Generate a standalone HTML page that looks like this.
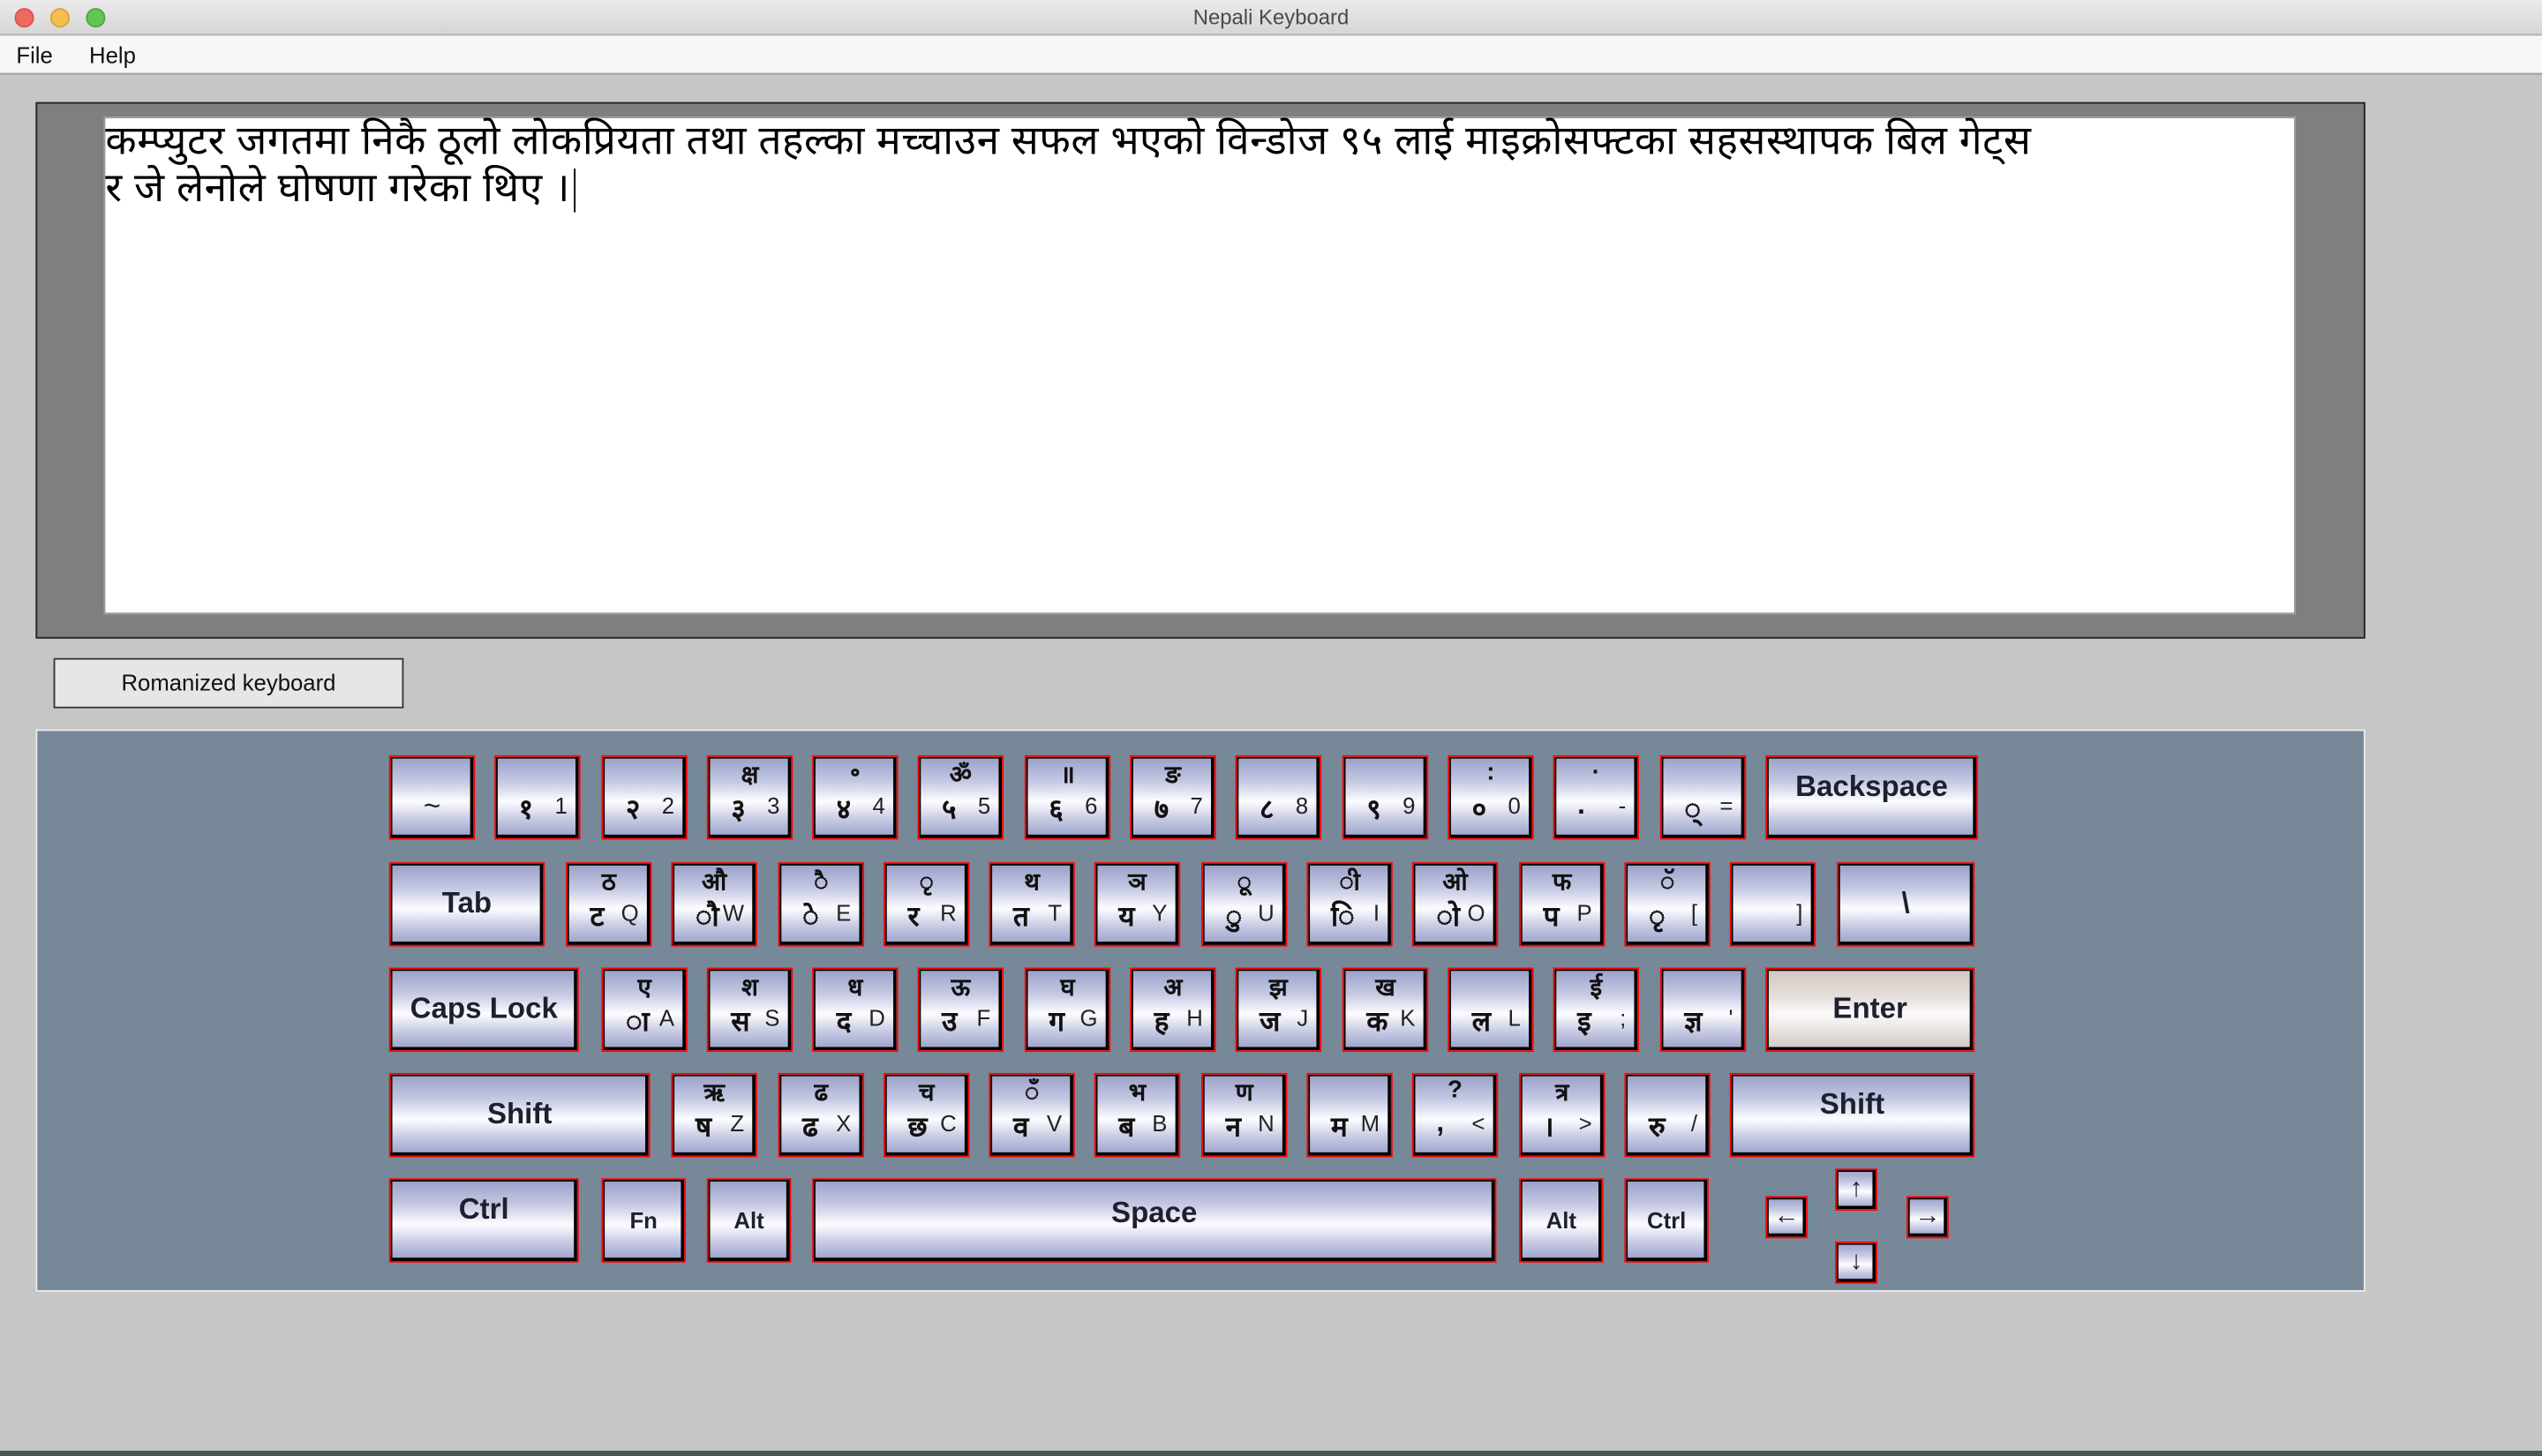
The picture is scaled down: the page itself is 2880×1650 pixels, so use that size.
<!DOCTYPE html>
<html><head><meta charset="utf-8">
<style>
*{margin:0;padding:0;box-sizing:border-box}
html,body{width:2880px;height:1650px;overflow:hidden;background:#c6c6c6}
#w{position:absolute;left:0;top:0;width:1568px;height:898px;transform:scale(1.83674);transform-origin:0 0;background:#c6c6c6;font-family:"Liberation Sans",sans-serif}
.title{position:absolute;left:0;top:0;width:1568px;height:22px;background:linear-gradient(#ebebeb,#d5d5d5);border-bottom:1px solid #b0b0b0;text-align:center;font-size:13px;line-height:22px;color:#4a4a4a}
.dot{position:absolute;top:5px;width:12px;height:12px;border-radius:50%}
.menu{position:absolute;left:0;top:22px;width:1568px;height:24px;background:#f7f7f7;border-bottom:1px solid #9a9a9a;font-size:14px;line-height:24px;color:#111}
.panel{position:absolute;left:22px;top:63px;width:1437px;height:331px;background:#7f7f7f;border:1px solid #222}
.text{position:absolute;left:41px;top:8px;width:1352px;height:307px;background:#fff;border:1px solid #999;font-size:25px;letter-spacing:0.3px;line-height:29px;padding-left:0px;color:#000;white-space:nowrap}
.btn{position:absolute;left:33px;top:406px;width:216px;height:31px;background:#e6e6e6;border:1px solid #333;font-size:14px;line-height:29px;text-align:center;color:#111}
.kb{position:absolute;left:22px;top:450px;width:1437px;height:347px;background:#778899;border:1px solid #eee;}
.k{position:absolute;height:52px;border:1px solid #f00;box-shadow:inset 1px 1px 0 #000,inset -2px -2px 0 #000;background:linear-gradient(#98a0c8 0%,#c4c8e2 30%,#fdfdff 55%,#c4c8e2 78%,#98a0c8 100%);color:#111;font-size:14px}
.k .t{position:absolute;left:0;right:0;top:1px;text-align:center;font-size:15px;font-weight:bold}
.k .d{position:absolute;left:14px;top:20px;font-size:17px;font-weight:bold}
.k .l{position:absolute;right:7px;top:22px;font-size:14px;color:#222}
.k .c{position:absolute;left:0;right:0;top:0;bottom:0;text-align:center;line-height:48px;font-size:18px;color:#1e2030;font-weight:600}
.k .s{font-size:14px}
.enter{background:linear-gradient(#cfc6c0 0%,#e6e0dc 35%,#fbfafa 55%,#e6e0dc 78%,#cfc6c0 100%)}
.a{height:26px}
.a .c{line-height:24px;font-size:16px;font-weight:bold}
</style></head><body><div id="w">
<div class="title">Nepali Keyboard
<div class="dot" style="left:9px;background:#ee6a5f;border:1px solid #d8554b"></div>
<div class="dot" style="left:31px;background:#f5bf4f;border:1px solid #d9a23a"></div>
<div class="dot" style="left:53px;background:#62c554;border:1px solid #4fa83f"></div>
</div>
<div class="menu"><span style="position:absolute;left:10px">File</span><span style="position:absolute;left:55px">Help</span></div>
<div class="panel"><div class="text">कम्प्युटर जगतमा निकै ठूलो लोकप्रियता तथा तहल्का मच्चाउन सफल भएको विन्डोज ९५ लाई माइक्रोसफ्टका सहसस्थापक बिल गेट्स<br>र जे लेनोले घोषणा गरेका थिए ।<span style="display:inline-block;width:1px;height:27px;background:#000;vertical-align:middle;margin-left:2px"></span></div></div>
<div class="btn">Romanized keyboard</div>
<div class="kb"></div>
</div>
<script>
const W=53;
function key(x,y,w,h,t,d,l,c,cls){
 const e=document.createElement('div');e.className='k '+(cls||'');
 e.style.left=x+'px';e.style.top=y+'px';e.style.width=w+'px';if(h)e.style.height=h+'px';
 let s='';
 if(c!==undefined&&c!==null)s+='<div class="c">'+c+'</div>';
 else{ if(t)s+='<div class="t">'+t+'</div>'; if(d)s+='<div class="d">'+d+'</div>'; if(l)s+='<div class="l">'+l+'</div>';}
 e.innerHTML=s;document.getElementById('w').appendChild(e);return e;
}
const xs=[240,305,371,436,501,566,632,697,762,828,893,958,1024];
const r1=[["","","","~"],["","१","1"],["","२","2"],["क्ष","३","3"],["॰","४","4"],["ॐ","५","5"],["॥","६","6"],["ङ","७","7"],["","८","8"],["","९","9"],[":","०","0"],["·",".","-"],["","्","="]];
r1.forEach((k,i)=>{key(xs[i],466,W,52,k[0],k[1],k[2],k[3]!==undefined?'<span style="position:relative;top:6px;font-weight:normal">~</span>':undefined);});
key(1089,466,131,52,null,null,null,'<span style="position:relative;top:-6px">Backspace</span>');
key(240,532,96,52,null,null,null,'Tab');
const x2=[349,414,480,545,610,675,741,806,871,937,1002,1067];
const r2=[["ठ","ट","Q"],["औ","ौ","W"],["ै","े","E"],["ृ","र","R"],["थ","त","T"],["ञ","य","Y"],["ू","ु","U"],["ी","ि","I"],["ओ","ो","O"],["फ","प","P"],["ॅ","ृ","["],["","","]"]];
r2.forEach((k,i)=>key(x2[i],532,W,52,k[0],k[1],k[2]));
key(1133,532,85,52,null,null,null,'\\');
key(240,597,117,52,null,null,null,'Caps Lock');
const x3=[371,436,501,566,632,697,762,828,893,958,1024];
const r3=[["ए","ा","A"],["श","स","S"],["ध","द","D"],["ऊ","उ","F"],["घ","ग","G"],["अ","ह","H"],["झ","ज","J"],["ख","क","K"],["","ल","L"],["ई","इ",";"],["","ज्ञ","'"]];
r3.forEach((k,i)=>key(x3[i],597,W,52,k[0],k[1],k[2]));
key(1089,597,129,52,null,null,null,'Enter','enter');
key(240,662,161,52,null,null,null,'Shift');
const x4=[414,480,545,610,675,741,806,871,937,1002];
const r4=[["ऋ","ष","Z"],["ढ","ढ","X"],["च","छ","C"],["ँ","व","V"],["भ","ब","B"],["ण","न","N"],["","म","M"],["?",",","<"],["त्र","।",">"],["","रु","/"]];
r4.forEach((k,i)=>key(x4[i],662,W,52,k[0],k[1],k[2]));
key(1067,662,151,52,null,null,null,'<span style="position:relative;top:-6px">Shift</span>');
key(240,727,117,52,null,null,null,'<span style="position:relative;top:-6px">Ctrl</span>');
key(371,727,52,52,null,null,null,'<span class="s">Fn</span>');
key(436,727,52,52,null,null,null,'<span class="s">Alt</span>');
key(501,727,422,52,null,null,null,'<span style="position:relative;top:-4px">Space</span>');
key(937,727,52,52,null,null,null,'<span class="s">Alt</span>');
key(1002,727,52,52,null,null,null,'<span class="s">Ctrl</span>');
key(1132,721,26,26,null,null,null,'↑','a');
key(1089,738,26,26,null,null,null,'←','a');
key(1176,738,26,26,null,null,null,'→','a');
key(1132,766,26,26,null,null,null,'↓','a');
</script>
<div style="position:absolute;left:0;top:1644px;width:2880px;height:6px;background:#4a5656"></div>
</body></html>
